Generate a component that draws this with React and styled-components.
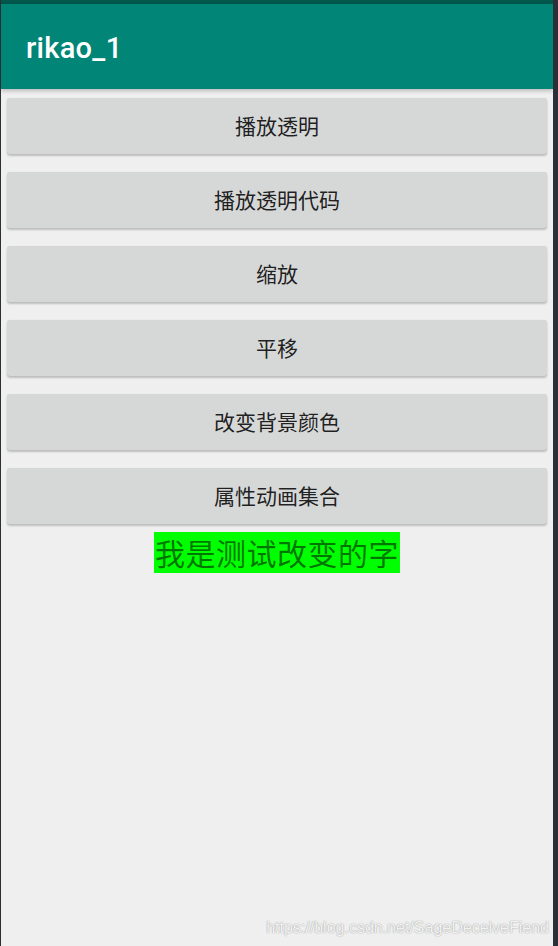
import React from 'react'
import styled, { createGlobalStyle } from 'styled-components'

const GlobalStyle = createGlobalStyle`
  html, body {
    margin: 0;
    padding: 0;
    background: #2a2f38;
  }
  * { box-sizing: border-box; }
`

const Frame = styled.div`
  width: 558px;
  height: 946px;
  display: flex;
  background: #2a2f38;
`

const Screen = styled.div`
  position: relative;
  margin-left: 1px;
  width: 552px;
  height: 946px;
  background: #efefef;
  display: flex;
  flex-direction: column;
  font-family: Roboto, "Noto Sans CJK SC", sans-serif;
  overflow: hidden;
`

const StatusBar = styled.div`
  height: 4px;
  background: #00574b;
`

const AppBar = styled.div`
  height: 85px;
  background: #008577;
  display: flex;
  align-items: center;
  padding-left: 25px;
  padding-top: 2px;
  box-shadow: 0 2px 4px rgba(0, 0, 0, 0.22);
  z-index: 1;
`

const Title = styled.h1`
  margin: 0;
  color: #ffffff;
  font-family: Roboto, sans-serif;
  font-weight: 500;
  font-size: 29px;
  letter-spacing: 0.3px;
`

const Content = styled.div`
  display: flex;
  flex-direction: column;
  align-items: center;
  padding: 9px 6px 0;
  gap: 18px;
`

const Button = styled.button`
  width: 100%;
  height: 56px;
  border: none;
  border-radius: 3px;
  background: #d6d7d7;
  box-shadow: 0 2px 2px rgba(0, 0, 0, 0.2), 0 0 1px rgba(0, 0, 0, 0.12);
  color: rgba(0, 0, 0, 0.87);
  font-family: "Noto Sans CJK SC", sans-serif;
  font-size: 21px;
  padding: 0 0 2px;
`

const Label = styled.div`
  margin-top: -10px;
  height: 41px;
  padding: 0 1px;
  background: #00ff00;
  color: rgba(0, 0, 0, 0.55);
  font-family: "Noto Sans CJK SC", sans-serif;
  font-size: 30px;
  line-height: 41px;
  letter-spacing: 0.5px;
`

const Watermark = styled.div`
  position: absolute;
  right: 4px;
  bottom: 9px;
  color: rgba(255, 255, 255, 0.9);
  text-shadow: 0 0 1px rgba(0, 0, 0, 0.35), 0 0 2px rgba(0, 0, 0, 0.15);
  font-family: "Liberation Sans", Arial, sans-serif;
  font-size: 16px;
`

const buttons = ['播放透明', '播放透明代码', '缩放', '平移', '改变背景颜色', '属性动画集合']

export default function App() {
  return (
    <Frame>
      <GlobalStyle />
      <Screen>
        <StatusBar />
        <AppBar>
          <Title>rikao_1</Title>
        </AppBar>
        <Content>
          {buttons.map((b) => (
            <Button key={b}>{b}</Button>
          ))}
          <Label>我是测试改变的字</Label>
        </Content>
        <Watermark>https://blog.csdn.net/SageDeceiveFiend</Watermark>
      </Screen>
    </Frame>
  )
}
